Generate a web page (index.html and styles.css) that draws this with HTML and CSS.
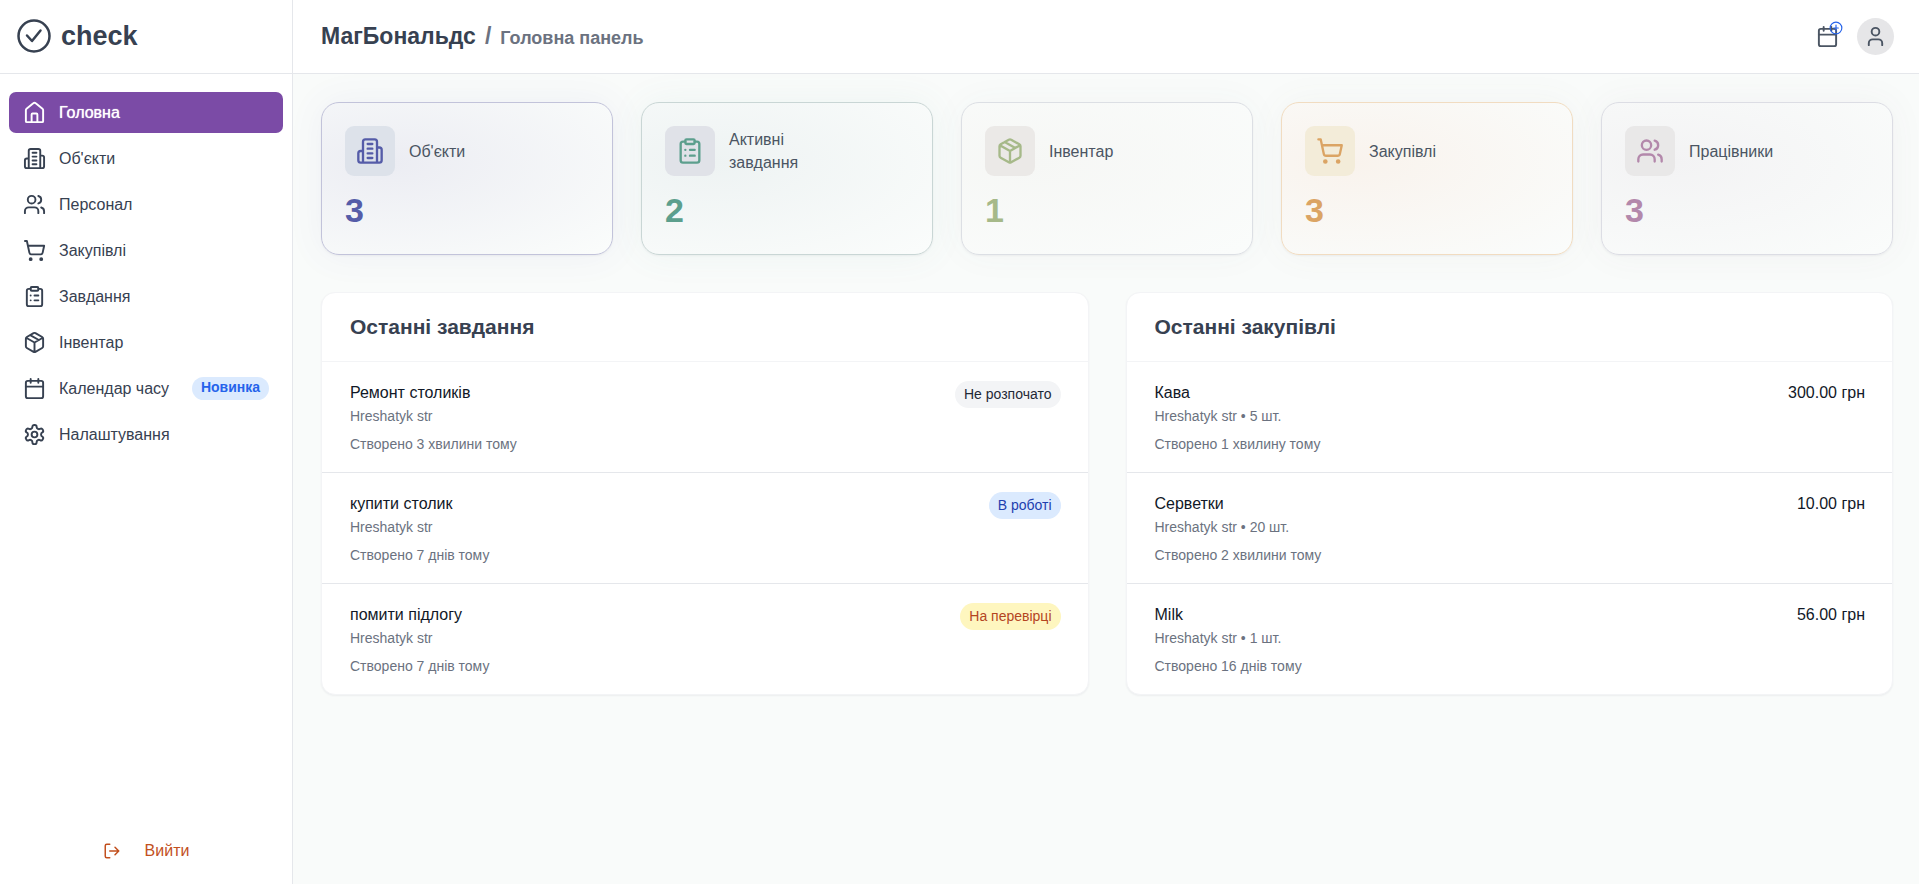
FILE: index.html
```html
<!DOCTYPE html>
<html lang="uk">
<head>
<meta charset="utf-8">
<meta name="viewport" content="width=device-width, initial-scale=1">
<title>check – Головна панель</title>
<link rel="stylesheet" href="styles.css">
</head>
<body>
<svg class="sprite" aria-hidden="true">
  <symbol id="i-home" viewBox="0 0 24 24"><path d="M9 22v-8a1 1 0 0 1 1-1h4a1 1 0 0 1 1 1v8M3 9.500a2 2 0 0 1 .7-1.500l7-5.600a2 2 0 0 1 2.600 0l7 5.600a2 2 0 0 1 .7 1.500V21a1 1 0 0 1-1 1H4a1 1 0 0 1-1-1z"/></symbol>
  <symbol id="i-building" viewBox="0 0 24 24"><path d="M6 22V4a2 2 0 0 1 2-2h8a2 2 0 0 1 2 2v18ZM6 12H4a2 2 0 0 0-2 2v6a2 2 0 0 0 2 2h2M18 9h2a2 2 0 0 1 2 2v9a2 2 0 0 1-2 2h-2M10 6h4M10 10h4M10 14h4M10 18h4"/></symbol>
  <symbol id="i-users" viewBox="0 0 24 24"><path d="M16 21v-2a4 4 0 0 0-4-4H6a4 4 0 0 0-4 4v2M22 21v-2a4 4 0 0 0-3-3.870M16 3.130a4 4 0 0 1 0 7.750"/><circle cx="9" cy="7" r="4"/></symbol>
  <symbol id="i-cart" viewBox="0 0 24 24"><circle cx="8" cy="21" r="1"/><circle cx="19" cy="21" r="1"/><path d="M2.050 2.050h2l2.660 12.420a2 2 0 0 0 2 1.580h9.780a2 2 0 0 0 1.950-1.570l1.650-7.430H5.120"/></symbol>
  <symbol id="i-tasks" viewBox="0 0 24 24"><rect x="8" y="2" width="8" height="4" rx="1"/><path d="M16 4h2a2 2 0 0 1 2 2v14a2 2 0 0 1-2 2H6a2 2 0 0 1-2-2V6a2 2 0 0 1 2-2h2M12 11h4M12 16h4M8 11h.01M8 16h.01"/></symbol>
  <symbol id="i-box" viewBox="0 0 24 24"><path d="M11 21.730a2 2 0 0 0 2 0l7-4A2 2 0 0 0 21 16V8a2 2 0 0 0-1-1.730l-7-4a2 2 0 0 0-2 0l-7 4A2 2 0 0 0 3 8v8a2 2 0 0 0 1 1.730zM12 22V12M3.300 7 12 12l8.700-5M7.500 4.270l9 5.150"/></symbol>
  <symbol id="i-calendar" viewBox="0 0 24 24"><rect x="3" y="4" width="18" height="18" rx="2"/><path d="M8 2v4M16 2v4M3 10h18"/></symbol>
  <symbol id="i-gear" viewBox="0 0 24 24"><path d="M12.220 2h-.44a2 2 0 0 0-2 2v.18a2 2 0 0 1-1 1.730l-.43.250a2 2 0 0 1-2 0l-.15-.08a2 2 0 0 0-2.730.730l-.22.380a2 2 0 0 0 .730 2.730l.150.100a2 2 0 0 1 1 1.720v.510a2 2 0 0 1-1 1.740l-.15.090a2 2 0 0 0-.73 2.730l.220.380a2 2 0 0 0 2.730.730l.150-.08a2 2 0 0 1 2 0l.430.250a2 2 0 0 1 1 1.730V20a2 2 0 0 0 2 2h.440a2 2 0 0 0 2-2v-.18a2 2 0 0 1 1-1.730l.430-.250a2 2 0 0 1 2 0l.150.080a2 2 0 0 0 2.730-.730l.220-.390a2 2 0 0 0-.730-2.730l-.150-.080a2 2 0 0 1-1-1.740v-.500a2 2 0 0 1 1-1.740l.150-.090a2 2 0 0 0 .730-2.730l-.220-.380a2 2 0 0 0-2.730-.730l-.150.080a2 2 0 0 1-2 0l-.430-.250a2 2 0 0 1-1-1.730V4a2 2 0 0 0-2-2z"/><circle cx="12" cy="12" r="3"/></symbol>
  <symbol id="i-user" viewBox="0 0 24 24"><path d="M19 21v-2a4 4 0 0 0-4-4H9a4 4 0 0 0-4 4v2"/><circle cx="12" cy="7" r="4"/></symbol>
  <symbol id="i-logout" viewBox="0 0 24 24"><path d="M9 21H5a2 2 0 0 1-2-2V5a2 2 0 0 1 2-2h4M16 17l5-5-5-5M21 12H9"/></symbol>
  <symbol id="i-plus" viewBox="0 0 24 24"><circle cx="12" cy="12" r="10"/><path d="M12 7v10M8 12h8"/></symbol>
  <symbol id="i-check" viewBox="0 0 36 36"><circle cx="18" cy="18" r="15.500"/><path d="M11 17.500l5 5.500 8.500-10.500"/></symbol>
</svg>

<div class="app">
  <aside class="sidebar">
    <a class="brand" href="#"><svg class="brand-icon"><use href="#i-check"/></svg>check</a>
    <nav class="nav">
      <a class="nav-item active" href="#" aria-current="page"><svg class="icon"><use href="#i-home"/></svg>Головна</a>
      <a class="nav-item" href="#"><svg class="icon"><use href="#i-building"/></svg>Об'єкти</a>
      <a class="nav-item" href="#"><svg class="icon"><use href="#i-users"/></svg>Персонал</a>
      <a class="nav-item" href="#"><svg class="icon"><use href="#i-cart"/></svg>Закупівлі</a>
      <a class="nav-item" href="#"><svg class="icon"><use href="#i-tasks"/></svg>Завдання</a>
      <a class="nav-item" href="#"><svg class="icon"><use href="#i-box"/></svg>Інвентар</a>
      <a class="nav-item" href="#"><svg class="icon"><use href="#i-calendar"/></svg>Календар часу<span class="tag">Новинка</span></a>
      <a class="nav-item" href="#"><svg class="icon"><use href="#i-gear"/></svg>Налаштування</a>
    </nav>
    <button class="logout" type="button"><svg class="icon-sm"><use href="#i-logout"/></svg>Вийти</button>
  </aside>

  <div class="page">
    <header class="topbar">
      <h1 class="crumbs">МагБональдс<span class="slash">/</span><span class="current">Головна панель</span></h1>
      <div class="actions">
        <button class="cal-btn" type="button" aria-label="Календар"><svg class="icon"><use href="#i-calendar"/></svg><svg class="cal-plus"><use href="#i-plus"/></svg></button>
        <button class="avatar" type="button" aria-label="Профіль"><svg class="icon"><use href="#i-user"/></svg></button>
      </div>
    </header>

    <main class="content">
      <section class="stats">
        <a class="stat indigo" href="#"><div class="stat-head"><span class="stat-icon"><svg class="icon-lg"><use href="#i-building"/></svg></span><span class="stat-label">Об'єкти</span></div><strong class="stat-value">3</strong></a>
        <a class="stat teal" href="#"><div class="stat-head"><span class="stat-icon"><svg class="icon-lg"><use href="#i-tasks"/></svg></span><span class="stat-label">Активні завдання</span></div><strong class="stat-value">2</strong></a>
        <a class="stat green" href="#"><div class="stat-head"><span class="stat-icon"><svg class="icon-lg"><use href="#i-box"/></svg></span><span class="stat-label">Інвентар</span></div><strong class="stat-value">1</strong></a>
        <a class="stat orange" href="#"><div class="stat-head"><span class="stat-icon"><svg class="icon-lg"><use href="#i-cart"/></svg></span><span class="stat-label">Закупівлі</span></div><strong class="stat-value">3</strong></a>
        <a class="stat mauve" href="#"><div class="stat-head"><span class="stat-icon"><svg class="icon-lg"><use href="#i-users"/></svg></span><span class="stat-label">Працівники</span></div><strong class="stat-value">3</strong></a>
      </section>

      <div class="panels">
        <section class="panel">
          <h2 class="panel-title">Останні завдання</h2>
          <ul class="list">
            <li class="row"><div><p class="name">Ремонт столиків</p><p class="meta">Hreshatyk str</p><p class="meta time">Створено 3 хвилини тому</p></div><span class="status todo">Не розпочато</span></li>
            <li class="row"><div><p class="name">купити столик</p><p class="meta">Hreshatyk str</p><p class="meta time">Створено 7 днів тому</p></div><span class="status doing">В роботі</span></li>
            <li class="row"><div><p class="name">помити підлогу</p><p class="meta">Hreshatyk str</p><p class="meta time">Створено 7 днів тому</p></div><span class="status review">На перевірці</span></li>
          </ul>
        </section>
        <section class="panel">
          <h2 class="panel-title">Останні закупівлі</h2>
          <ul class="list">
            <li class="row"><div><p class="name">Кава</p><p class="meta">Hreshatyk str • 5 шт.</p><p class="meta time">Створено 1 хвилину тому</p></div><span class="name">300.00 грн</span></li>
            <li class="row"><div><p class="name">Серветки</p><p class="meta">Hreshatyk str • 20 шт.</p><p class="meta time">Створено 2 хвилини тому</p></div><span class="name">10.00 грн</span></li>
            <li class="row"><div><p class="name">Milk</p><p class="meta">Hreshatyk str • 1 шт.</p><p class="meta time">Створено 16 днів тому</p></div><span class="name">56.00 грн</span></li>
          </ul>
        </section>
      </div>
    </main>
  </div>
</div>
</body>
</html>
```

FILE: styles.css
```css
*, *::before, *::after { box-sizing: border-box; }

body {
  margin: 0;
  font: 16px/24px "Liberation Sans", Arial, sans-serif;
  color: #374151;
  background: #f9fbfa;
}

h1, h2, p, ul { margin: 0; padding: 0; }
ul { list-style: none; }
a { color: inherit; text-decoration: none; }
button { font: inherit; border: 0; padding: 0; background: none; cursor: pointer; }

svg {
  flex: none;
  fill: none;
  stroke: currentColor;
  stroke-width: 2;
  stroke-linecap: round;
  stroke-linejoin: round;
}
.sprite { display: none; }
.icon { width: 23px; height: 23px; }
.icon-sm { width: 18px; height: 18px; }
.icon-lg { width: 28px; height: 28px; }

.app { display: flex; min-height: 100vh; }

/* Sidebar */
.sidebar {
  width: 293px;
  flex: none;
  display: flex;
  flex-direction: column;
  background: #fff;
  border-right: 1px solid #e5e7eb;
}
.brand {
  display: flex;
  align-items: center;
  gap: 9px;
  height: 74px;
  padding: 0 16px 2px;
  border-bottom: 1px solid #e5e7eb;
  font-size: 27px;
  font-weight: 700;
}
.brand-icon { width: 36px; height: 36px; stroke-width: 2.5; }
.nav {
  display: flex;
  flex-direction: column;
  gap: 5px;
  padding: 18px 9px;
}
.nav-item {
  display: flex;
  align-items: center;
  gap: 13px;
  height: 41px;
  padding: 0 14px;
  border-radius: 7px;
}
.nav-item.active { background: #7b4ba6; color: #fff; text-shadow: 0 0 1px #fff; }
.tag {
  margin-left: auto;
  padding: 0 9px 2px;
  border-radius: 12px;
  background: #dbeafe;
  color: #2563eb;
  font-size: 14px;
  font-weight: 700;
  line-height: 21px;
}
.logout {
  display: flex;
  align-items: center;
  justify-content: center;
  gap: 24px;
  margin-top: auto;
  padding: 11px 0 21px;
  color: #c2501e;
}

/* Top bar */
.page { flex: 1; min-width: 0; }
.topbar {
  display: flex;
  align-items: center;
  justify-content: space-between;
  height: 74px;
  padding: 0 25px 0 28px;
  background: #fff;
  border-bottom: 1px solid #e5e7eb;
}
.crumbs {
  display: flex;
  align-items: baseline;
  gap: 9px;
  font-size: 23px;
  line-height: 28px;
}
.slash, .current { color: #6b7280; }
.current { font-size: 18px; }
.actions { display: flex; align-items: center; gap: 18px; color: #4b5563; }
.cal-btn { position: relative; display: flex; color: inherit; }
.cal-plus {
  position: absolute;
  top: -4px;
  right: -4px;
  width: 14px;
  height: 14px;
  color: #2563eb;
}
.avatar {
  display: flex;
  align-items: center;
  justify-content: center;
  width: 37px;
  height: 37px;
  border-radius: 50%;
  background: #e6e6e8;
  color: inherit;
}

.content { padding: 28px 26px 28px 28px; overflow: hidden; }

/* Statistic cards */
.stats { display: grid; grid-template-columns: repeat(5, 1fr); gap: 28px; }
.stat {
  padding: 23px;
  border: 1px solid var(--line);
  border-radius: 18px;
  background: radial-gradient(ellipse at 25% 40%, var(--tint), #fafcfb 95%);
  box-shadow: 0 1px 2px rgba(30, 40, 60, 0.05), 0 0 36px var(--glow);
}
.stat-head { display: flex; align-items: center; gap: 14px; }
.stat-icon {
  display: flex;
  align-items: center;
  justify-content: center;
  width: 50px;
  height: 50px;
  border-radius: 9px;
  background: var(--box);
}
.stat-icon, .stat-value { color: var(--ink); }
.stat-label { max-width: 100px; line-height: 23px; color: #4b5563; }
.stat-value { display: block; margin-top: 14px; font-size: 34px; line-height: 41px; }

.indigo { --ink: #555ca8; --line: #c2c3da; --tint: #ecedf3; --box: #dde2ea; --glow: rgba(85, 92, 168, 0.07); }
.teal { --ink: #5c9f8d; --line: #c9d6d5; --tint: #eef3f3; --box: #e0e2e8; --glow: rgba(92, 159, 141, 0.07); }
.green { --ink: #a6b989; --line: #dcdfe4; --tint: #f6f7f5; --box: #ebe9e7; --glow: rgba(80, 90, 100, 0.04); }
.orange { --ink: #dba464; --line: #f1dcc1; --tint: #f9f3ed; --box: #f3ecd9; --glow: rgba(120, 110, 100, 0.05); }
.mauve { --ink: #b388ab; --line: #dcdde4; --tint: #f3f3f4; --box: #e9e8e8; --glow: rgba(90, 85, 100, 0.05); }

/* Recent activity panels */
.panels {
  display: grid;
  grid-template-columns: 1fr 1fr;
  gap: 37px;
  margin-top: 37px;
}
.panel {
  border: 1px solid #f3f4f6;
  border-radius: 14px;
  background: #fff;
  box-shadow: 0 1px 2px rgba(30, 40, 60, 0.06);
}
.panel-title {
  padding: 20px 28px;
  border-bottom: 1px solid #f3f4f6;
  font-size: 21px;
  line-height: 28px;
}
.row {
  display: flex;
  justify-content: space-between;
  align-items: flex-start;
  padding: 19px 27px 18px 28px;
}
.row + .row { border-top: 1px solid #e5e7eb; }
.name { color: #111827; }
.meta { margin-top: 1px; color: #6b7280; font-size: 14px; line-height: 20px; }
.time { margin-top: 8px; }
.status {
  padding: 0 9px 1px;
  border-radius: 14px;
  font-size: 14px;
  line-height: 26px;
}
.todo { background: #f3f4f6; color: #1f2937; }
.doing { background: #dbeafe; color: #1e40af; }
.review { background: #fef6bf; color: #b4451f; }
```
